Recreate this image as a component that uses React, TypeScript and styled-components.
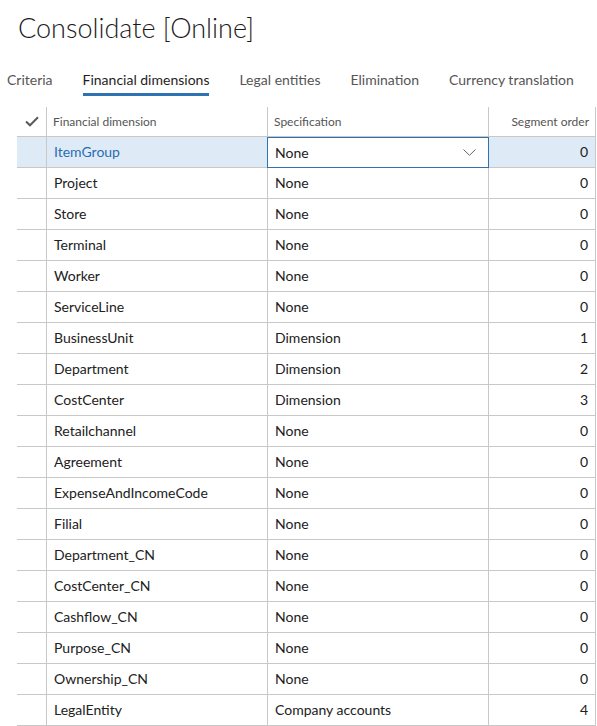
import React from 'react';
import styled, { createGlobalStyle } from 'styled-components';

const GlobalStyle = createGlobalStyle`
  html, body {
    margin: 0;
    padding: 0;
    background: #ffffff;
  }
  body {
    font-family: 'Segoe UI', Lato, 'Open Sans', sans-serif;
    color: #212121;
  }
`;

const Page = styled.div`
  width: 597px;
  height: 726px;
  overflow: hidden;
  display: flex;
  flex-direction: column;
`;

const Title = styled.h1`
  margin: 0;
  padding: 10px 0 0 18px;
  height: 37px;
  line-height: 36px;
  font-size: 27px;
  font-weight: 300;
  color: #1b1b1b;
`;

const TabBar = styled.div`
  display: flex;
  padding: 24px 0 0 7px;
  height: 60px;
  box-sizing: border-box;
  gap: 30px;
`;

const Tab = styled.div<{ $active?: boolean }>`
  font-size: 14px;
  line-height: 18px;
  color: ${(p) => (p.$active ? '#1e1e1e' : '#555')};
  height: 18px;
  padding-bottom: 4px;
  border-bottom: 3px solid ${(p) => (p.$active ? '#2f72b2' : 'transparent')};
`;

const Grid = styled.div`
  margin-left: 17px;
  display: grid;
  grid-template-columns: 30px 221px 221px 107px;
`;

const HeadCell = styled.div<{ $right?: boolean; $first?: boolean }>`
  height: 30px;
  box-sizing: border-box;
  display: flex;
  align-items: center;
  justify-content: ${(p) => (p.$right ? 'flex-end' : p.$first ? 'center' : 'flex-start')};
  padding: 0 6px;
  font-size: 12px;
  color: #555;
  border-right: 1px solid #c8c8c8;
  border-bottom: 1px solid #c8c8c8;
`;

const Cell = styled.div<{ $right?: boolean; $selected?: boolean; $link?: boolean; $edit?: boolean }>`
  height: 31px;
  box-sizing: border-box;
  display: flex;
  align-items: center;
  justify-content: ${(p) => (p.$right ? 'flex-end' : 'flex-start')};
  padding: 0 7px 1px 7px;
  font-size: 14px;
  color: ${(p) => (p.$link ? '#2a6db3' : '#212121')};
  background: ${(p) => (p.$edit ? '#ffffff' : p.$selected ? '#deebf7' : '#ffffff')};
  border-right: 1px solid #c8c8c8;
  border-bottom: 1px solid #c8c8c8;
  ${(p) =>
    p.$edit
      ? 'border: 1px solid #2f72b2; margin-left: -1px; width: calc(100% + 1px); padding-left: 7px;'
      : ''}
`;

const Select = styled.div`
  display: flex;
  width: 100%;
  align-items: center;
  justify-content: space-between;
  padding-right: 5px;
`;

type Row = [string, string, number];

const rows: Row[] = [
  ['ItemGroup', 'None', 0],
  ['Project', 'None', 0],
  ['Store', 'None', 0],
  ['Terminal', 'None', 0],
  ['Worker', 'None', 0],
  ['ServiceLine', 'None', 0],
  ['BusinessUnit', 'Dimension', 1],
  ['Department', 'Dimension', 2],
  ['CostCenter', 'Dimension', 3],
  ['Retailchannel', 'None', 0],
  ['Agreement', 'None', 0],
  ['ExpenseAndIncomeCode', 'None', 0],
  ['Filial', 'None', 0],
  ['Department_CN', 'None', 0],
  ['CostCenter_CN', 'None', 0],
  ['Cashflow_CN', 'None', 0],
  ['Purpose_CN', 'None', 0],
  ['Ownership_CN', 'None', 0],
  ['LegalEntity', 'Company accounts', 4],
];

const tabs = ['Criteria', 'Financial dimensions', 'Legal entities', 'Elimination', 'Currency translation'];

const Check = () => (
  <svg width="14" height="11" viewBox="0 0 14 11">
    <path d="M1 5.5 L5 9.3 L13 1.2" fill="none" stroke="#5a5a5a" strokeWidth="2" />
  </svg>
);

const Chevron = () => (
  <svg width="13" height="7" viewBox="0 0 13 7">
    <path d="M0.5 0.5 L6.5 6.3 L12.5 0.5" fill="none" stroke="#666" strokeWidth="1" />
  </svg>
);

const App: React.FC = () => {
  return (
    <Page>
      <GlobalStyle />
      <Title>Consolidate [Online]</Title>
      <TabBar>
        {tabs.map((t) => (
          <Tab key={t} $active={t === 'Financial dimensions'}>
            {t}
          </Tab>
        ))}
      </TabBar>
      <Grid>
        <HeadCell $first>
          <Check />
        </HeadCell>
        <HeadCell>Financial dimension</HeadCell>
        <HeadCell>Specification</HeadCell>
        <HeadCell $right>Segment order</HeadCell>
        {rows.map(([name, spec, order], i) => {
          const sel = i === 0;
          return (
            <React.Fragment key={name}>
              <Cell $selected={sel} />
              <Cell $selected={sel} $link={sel}>
                {name}
              </Cell>
              {sel ? (
                <Cell $edit>
                  <Select>
                    <span>{spec}</span>
                    <Chevron />
                  </Select>
                </Cell>
              ) : (
                <Cell>{spec}</Cell>
              )}
              <Cell $selected={sel} $right>
                {order}
              </Cell>
            </React.Fragment>
          );
        })}
      </Grid>
    </Page>
  );
};

export default App;
